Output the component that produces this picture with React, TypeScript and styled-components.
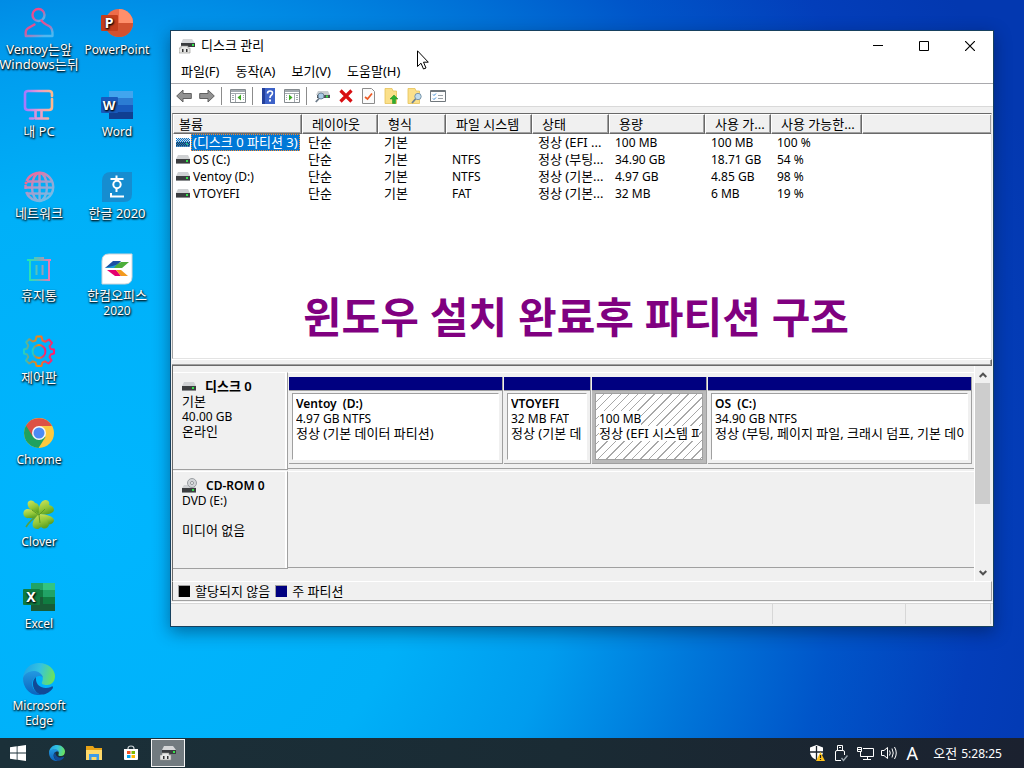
import React from "react";
import styled, { createGlobalStyle, css } from "styled-components";

/* ---------- base ---------- */

const Global = createGlobalStyle`
  *, *::before, *::after { box-sizing: border-box; }
  html, body { margin: 0; padding: 0; }
  body {
    font-family: "Noto Sans", "Noto Sans CJK KR", sans-serif;
    font-size: 12px;
    line-height: 15px;
    color: #000;
    overflow: hidden;
  }
  button {
    font: inherit;
    color: inherit;
    background: none;
    border: 0;
    padding: 0;
    margin: 0;
    cursor: default;
  }
  svg { display: block; flex: none; }
`;

const Label = styled.span<{ $hangul: boolean; $bold?: boolean }>`
  display: block;
  white-space: pre;
  font-size: ${(p) => (p.$hangul ? 13 : 12)}px;
  font-weight: ${(p) => (p.$bold ? 600 : 400)};
`;

const T = ({ children, bold }: { children: string; bold?: boolean }) => (
  <Label $hangul={/[가-힣]/.test(children)} $bold={bold}>
    {children}
  </Label>
);

/* ---------- desktop ---------- */

const Desktop = styled.div`
  position: relative;
  display: flex;
  flex-direction: column;
  min-height: 100vh;
  background: radial-gradient(
    circle at 100px 520px,
    #00b6ff 0,
    #00b0f8 320px,
    #009cee 470px,
    #0076d9 610px,
    #0055c9 740px,
    #033eba 880px,
    #0338b0 1000px
  );
`;

const Shortcuts = styled.nav`
  flex: 1;
  display: grid;
  grid-auto-flow: column;
  grid-template-rows: repeat(8, 82px) 66px;
  grid-auto-columns: 78px;
  padding-top: 7px;
  align-content: start;
`;

const Shortcut = styled.button`
  display: flex;
  flex-direction: column;
  align-items: center;
  justify-content: flex-start;
  gap: 3px;
  color: #fff;
  text-shadow: 1px 1px 2px #000, 0 1px 2px rgba(0, 0, 0, 0.8);
`;

/* ---------- window ---------- */

const Window = styled.main`
  position: absolute;
  left: 170px;
  right: 30px;
  top: 30px;
  display: flex;
  flex-direction: column;
  background: #f0f0f0;
  border: 1px solid #17415f;
  box-shadow: 0 5px 16px rgba(0, 20, 50, 0.45);
`;

const TitleBar = styled.header`
  display: flex;
  align-items: center;
  height: 29px;
  padding-left: 8px;
  background: #fff;
`;

const Title = styled.h1`
  flex: 1;
  margin: 0 0 0 6px;
  font-weight: 400;
  font-size: 12px;
`;

const CaptionButton = styled.button`
  display: flex;
  align-items: center;
  justify-content: center;
  width: 46px;
  height: 29px;
`;

const MenuBar = styled.nav`
  display: flex;
  align-items: center;
  height: 24px;
  padding-left: 2px;
  background: #fff;
  border-bottom: 1px solid #a9a9ad;
`;

const MenuItem = styled.button`
  padding: 0 8px;
`;

const ToolBar = styled.div`
  display: flex;
  align-items: center;
  height: 23px;
  padding: 2px 0 0 1px;
  background: #fff;
  border-bottom: 1px solid #d9d9d9;
`;

const Tool = styled.button`
  display: flex;
  align-items: center;
  justify-content: center;
  width: 23px;
  height: 18px;
`;

const Divider = styled.span`
  width: 8px;
  height: 18px;
  background: linear-gradient(#8c8c8c, #8c8c8c) 3px 0 / 1px 100% no-repeat;
`;

const Client = styled.div`
  padding: 6px 1px 0;
`;

/* ---------- volume list ---------- */

const ListPane = styled.section`
  min-height: 246px;
  background: #fff;
  border: 1px solid #a0a0a0;
  border-top-color: #696969;
  border-right-color: #e3e3e3;
  border-bottom-color: #e3e3e3;
`;

const VolumeTable = styled.table`
  width: 100%;
  table-layout: fixed;
  border-collapse: separate;
  border-spacing: 0;
`;

const HeadCell = styled.th<{ $first?: boolean }>`
  height: 20px;
  padding: 1px 0 0 ${(p) => (p.$first ? 5 : 9)}px;
  font-weight: 400;
  text-align: left;
  line-height: 15px;
  overflow: hidden;
  background: #f0f0f0;
  border-top: 1px solid #fff;
  border-left: 1px solid #fff;
  border-right: 1px solid #696969;
  border-bottom: 1px solid #696969;
  box-shadow: inset -1px -1px 0 #a0a0a0;
  &:last-child { border-right: 0; }
`;

const Cell = styled.td`
  height: 17px;
  padding: 0 0 0 6px;
  line-height: 17px;
  overflow: hidden;
`;

const NameCell = styled(Cell)`
  padding: 0 0 0 3px;
`;

const NameWrap = styled.div`
  display: flex;
  align-items: center;
  gap: 1px;
`;

const Name = styled.span<{ $selected?: boolean }>`
  padding: 0 2px;
  ${(p) =>
    p.$selected &&
    css`
      color: #fff;
      background: #0078d7;
      outline: 1px dotted #ff8728;
      outline-offset: -1px;
    `}
`;

const Headline = styled.p`
  margin: 85px 12px 0 0;
  text-align: center;
  white-space: nowrap;
  font-size: 42px;
  line-height: 60px;
  font-weight: 700;
  color: #800080;
`;

const Splitter = styled.div`
  height: 7px;
  border-top: 1px solid #fff;
  border-bottom: 1px solid #696969;
  border-right: 1px solid #696969;
  box-shadow: inset -1px -1px 0 #a0a0a0;
`;

/* ---------- disk view ---------- */

const DiskPane = styled.section`
  display: flex;
  height: 215px;
  border-left: 1px solid #696969;
`;

const Disks = styled.div`
  flex: 1;
  min-width: 0;
  display: flex;
  flex-direction: column;
  gap: 1px;
  padding-top: 6px;
  border-right: 1px solid #fff;
`;

const DiskRow = styled.article`
  display: flex;
  height: 98px;
`;

const DiskInfo = styled.div`
  width: 115px;
  padding: 6px 0 0 9px;
  border-top: 1px solid #fff;
  border-right: 1px solid #a0a0a0;
  border-bottom: 1px solid #a0a0a0;
  box-shadow: inset -2px 0 0 #fff;
`;

const DiskName = styled.div`
  display: flex;
  align-items: center;
  height: 15px;
  gap: 9px;
`;

const Line = styled.div`
  height: 15px;
`;

const Volumes = styled.div`
  flex: 1;
  min-width: 0;
  display: flex;
  gap: 1px;
  height: 97px;
  padding: 4px 2px 4px 1px;
  border-top: 1px solid #fff;
  border-bottom: 1px solid #a0a0a0;
`;

const Volume = styled.div<{ $share: number; $selected?: boolean }>`
  flex: ${(p) => p.$share} 1 0;
  min-width: 0;
  display: flex;
  flex-direction: column;
  border-right: 1px solid #a0a0a0;
  border-bottom: 1px solid #a0a0a0;
  background: ${(p) => (p.$selected ? "#b9b9b9" : "#f0f0f0")};
`;

const Stripe = styled.div`
  height: 14px;
  background: #000080;
  border-bottom: 1px solid #a0a0a0;
`;

const VolumeBody = styled.div<{ $selected?: boolean }>`
  flex: 1;
  margin: 2px 3px 3px;
  padding: 2px 3px;
  overflow: hidden;
  border: 1px solid #a0a0a0;
  border-right-color: ${(p) => (p.$selected ? "#a0a0a0" : "#fff")};
  border-bottom-color: ${(p) => (p.$selected ? "#a0a0a0" : "#fff")};
  background: ${(p) =>
    p.$selected
      ? "repeating-linear-gradient(135deg, #fff 0 5px, #a8a8a8 5px 6px)"
      : "#fff"};
`;

const VolumeLine = styled.div<{ $backed?: boolean }>`
  width: fit-content;
  max-width: 100%;
  height: 15px;
  overflow: hidden;
  background: ${(p) => (p.$backed ? "#fff" : "none")};
`;

const ScrollBar = styled.div`
  display: flex;
  flex-direction: column;
  width: 17px;
  padding-right: 1px;
`;

const ScrollButton = styled.button`
  display: flex;
  align-items: center;
  justify-content: center;
  height: 17px;
`;

const Track = styled.div`
  flex: 1;
`;

const Thumb = styled.div`
  width: 15px;
  height: 121px;
  background: #cdcdcd;
`;

const Legend = styled.footer`
  display: flex;
  align-items: center;
  height: 20px;
  padding-left: 5px;
  border: 1px solid #a0a0a0;
  border-top-color: #fff;
  border-left-color: #696969;
`;

const Swatch = styled.span<{ $color: string }>`
  width: 12px;
  height: 12px;
  margin: 0 5px;
  background: ${(p) => p.$color};
  border-top: 1px solid #a0a0a0;
  border-left: 1px solid #a0a0a0;
  &:first-child { margin-left: 0; }
`;

const StatusBar = styled.div`
  display: flex;
  height: 24px;
  padding: 1px 2px 2px 0;
  margin-top: 1px;
  border-top: 1px solid #fff;
  box-shadow: inset 0 1px 0 #d7d7d7;
`;

const StatusCell = styled.div<{ $width?: number }>`
  ${(p) => (p.$width ? css`width: ${p.$width}px;` : css`flex: 1;`)}
  border-right: 1px solid #d7d7d7;
`;

/* ---------- taskbar ---------- */

const TaskBar = styled.footer`
  display: flex;
  align-items: center;
  height: 30px;
  color: #fff;
  background: linear-gradient(90deg, #1b3039, #1a2b34 55%, #1b212f);
`;

const TaskButton = styled.button<{ $active?: boolean }>`
  display: flex;
  align-items: center;
  justify-content: center;
  width: 37px;
  height: 30px;
  &:first-child { width: 38px; padding-right: 2px; }
  ${(p) =>
    p.$active &&
    css`
      width: 34px;
      height: 28px;
      margin-left: 2px;
      background: #727b80;
      border: 1px solid #f4f4f4;
    `}
`;

const Tray = styled.div`
  display: flex;
  align-items: center;
  margin-left: auto;
  padding-right: 22px;
`;

const TrayButton = styled.button<{ $narrow?: boolean }>`
  display: flex;
  align-items: center;
  justify-content: center;
  width: ${(p) => (p.$narrow ? 22 : 24)}px;
  height: 30px;
`;

const InputMode = styled.span`
  font-size: 18px;
  line-height: 20px;
`;

const Clock = styled.time`
  display: flex;
  gap: 4px;
  padding-left: 10px;
`;

const Pointer = styled.svg`
  position: absolute;
  left: 417px;
  top: 50px;
`;

/* ---------- desktop icons ---------- */

const Icon32 = ({ children }: { children: React.ReactNode }) => (
  <svg width="32" height="32" viewBox="0 0 32 32" fill="none" aria-hidden="true">
    {children}
  </svg>
);

const Grad = ({ id, stops, vertical }: { id: string; stops: string[]; vertical?: boolean }) => (
  <linearGradient id={id} x1="0" y1="0" x2={vertical ? "0" : "1"} y2={vertical ? "1" : "0"}>
    {stops.map((c, i) => (
      <stop key={c + i} offset={i / (stops.length - 1)} stopColor={c} />
    ))}
  </linearGradient>
);

const UserIcon = () => (
  <Icon32>
    <defs>
      <linearGradient id="user" x1="0" y1="0" x2=".7" y2="1">
        <stop offset="0" stopColor="#ff3f7e" />
        <stop offset=".55" stopColor="#d65a9c" />
        <stop offset="1" stopColor="#4fb8f0" />
      </linearGradient>
    </defs>
    <g stroke="url(#user)" strokeWidth="2.4" strokeLinejoin="round" strokeLinecap="round">
      <circle cx="15.500" cy="8" r="6" />
      <path d="M18.500 13.500Q20 16 26 19Q30 21 29.500 29H2.800Q2 23 5 21.200L11.500 17.500" />
    </g>
  </Icon32>
);

const PcIcon = () => (
  <Icon32>
    <defs><Grad id="pc" stops={["#a678ff", "#e79ad0", "#ffb88c"]} /></defs>
    <path
      d="M29 7V5Q29 2 26 2H5Q2 2 2 5V18Q2 21 5 21H26Q29 21 29 18V10M12.500 21V29M18.500 21V29M7 29.500H10M12.500 29.500H25"
      stroke="url(#pc)"
      strokeWidth="2.6"
      strokeLinecap="round"
    />
  </Icon32>
);

const GlobeIcon = () => (
  <Icon32>
    <defs>
      <linearGradient id="globe" gradientUnits="userSpaceOnUse" x1="4" y1="2" x2="24" y2="30">
        <stop offset="0" stopColor="#ff5f93" />
        <stop offset=".5" stopColor="#a99ccb" />
        <stop offset="1" stopColor="#6cc0ea" />
      </linearGradient>
    </defs>
    <g stroke="url(#globe)" strokeWidth="2.400">
      <path d="M3.500 10A14 14 0 1 1 3.200 21M2.500 14V18" />
      <ellipse cx="16.500" cy="16" rx="7.500" ry="14" />
      <path d="M16.500 1.500L16.600 30.500M4 10.500L28 10.600M2 16.500L30.500 16.600M4 22.500L28 22.600" />
    </g>
    <circle cx="3" cy="12" r="1.500" fill="#f2688f" />
  </Icon32>
);

const TrashIcon = () => (
  <Icon32>
    <defs>
      <linearGradient id="trash" gradientUnits="userSpaceOnUse" x1="4" y1="0" x2="28" y2="0">
        <stop stopColor="#19edb0" />
        <stop offset=".5" stopColor="#6ab6bb" />
        <stop offset="1" stopColor="#ff70b0" />
      </linearGradient>
    </defs>
    <path
      d="M4 7H28M7 7V27H26V7M12 7V5H20V7M13.500 12V22M19.500 12V22"
      stroke="url(#trash)"
      strokeWidth="2"
    />
  </Icon32>
);

const GearIcon = () => (
  <Icon32>
    <defs>
      <Grad id="gear" stops={["#1fd0c8", "#b08a50", "#ff8a00", "#e9406a", "#ff1e6e"]} />
    </defs>
    <g stroke="url(#gear)" strokeWidth="2" strokeLinejoin="round">
      <path d="M13.500 1.500H18.500L19.500 5.500L22.500 6.700L26 4.500L29 8L26.500 11.200L27.700 14L31 14.500V18.500L27.700 19.500L26.500 22L28.500 25.500L25.500 28.500L22 26.300L19.500 27.500L18.500 31H13.500L12.500 27.500L9.700 26.300L6.200 28.500L3 25.500L5.200 22L4.200 19.500L1 18.500V14.500L4.200 13.500L5.200 10.500L3.200 7.200L6.200 4.200L9.700 6.500L12.500 5.500Z" />
      <circle cx="16" cy="16.500" r="6.400" />
    </g>
  </Icon32>
);

const ChromeIcon = () => (
  <Icon32>
    <circle cx="16" cy="16" r="15" fill="#fcc93f" />
    <path d="M16 16L3 8.500A15 15 0 0 0 15.500 31L22.500 20Z" fill="#1fa15d" />
    <path d="M3 8.500A15 15 0 0 1 29 9H16L9.500 19Z" fill="#dd5144" />
    <circle cx="16" cy="16" r="7" fill="#f4f6f8" />
    <circle cx="16" cy="16" r="5.500" fill="#4c8bf5" />
  </Icon32>
);

const CloverIcon = () => (
  <Icon32>
    <defs>
      <linearGradient id="clover" x1="0" y1="0" x2=".4" y2="1">
        <stop stopColor="#d3e65a" />
        <stop offset=".6" stopColor="#93c83a" />
        <stop offset="1" stopColor="#5ea324" />
      </linearGradient>
    </defs>
    <path d="M16 16Q8 20 3 28" stroke="#58a03c" strokeWidth="1.600" />
    <g fill="url(#clover)">
      <path d="M16 15C9 13 3 8 5 3C8 0 11 2 12 4C16 4 17 9 16 15Z" />
      <path d="M16 15C15 7 18 2 22 1C26 1 27 4 26 6C31 7 32 11 30 13C26 16 20 16 16 15Z" />
      <path d="M16 15C10 11 4 8 1 12C-1 16 2 20 6 19C10 20 14 18 16 15Z" />
      <path d="M16 15C24 15 32 18 31 22C29 26 26 26 24 25C22 22 18 19 16 15Z" />
      <path d="M16 15C10 20 8 26 11 29C14 31 16 30 18 28C22 31 25 29 26 26C25 21 20 17 16 15Z" />
    </g>
    <path d="M16 16L9 11M16 16L22 10M16 16L17 24" stroke="#5a9a26" strokeWidth="1" />
  </Icon32>
);

const EdgeShape = ({ size }: { size: number }) => (
  <svg width={size} height={size} viewBox="0 0 32 32" fill="none" aria-hidden="true">
    <defs>
      <linearGradient id={`edgeTop${size}`} x1="0" y1=".3" x2="1" y2=".5">
        <stop stopColor="#1fa3e6" />
        <stop offset=".5" stopColor="#35c3e0" />
        <stop offset="1" stopColor="#6be35a" />
      </linearGradient>
      <Grad id={`edgeBody${size}`} stops={["#2299e2", "#0b63bd"]} vertical />
    </defs>
    <path d="M0 15C1 5 8 0 16 0C26 0 32 7 32 13C32 19 28 22 24 22C20 22 18 21 19 19C20 17 20 15 19 13C16 8 6 6 0 15Z" fill={`url(#edgeTop${size})`} />
    <path d="M0 15C2 9 8 8 12 8C18 9 20 13 20 15C19 12 13 12 10 17C7 24 13 31 19 31.600C8 34 0 26 0 15Z" fill={`url(#edgeBody${size})`} />
    <path d="M13 14C8 18 9 27 16 31C22 33 27 29 30 25C30 23 29 23 28 24C20 27 12 23 13 14Z" fill="#114a97" />
  </svg>
);

const BrandText = ({ x, y, size, children }: { x: number; y: number; size: number; children: string }) => (
  <text x={x} y={y} fill="#fff" fontFamily="Noto Sans, sans-serif" fontSize={size} fontWeight="700" textAnchor="middle">
    {children}
  </text>
);

const PowerPointIcon = () => (
  <Icon32>
    <circle cx="18" cy="16" r="14" fill="#ee6c4a" />
    <path d="M18 2A14 14 0 0 1 32 16H18Z" fill="#ff8f6b" />
    <path d="M4 16H32A14 14 0 0 1 4 16Z" fill="#d35230" />
    <rect y="8" width="17" height="16" rx="1" fill="#c43e1c" />
    <BrandText x={8} y={21} size={14}>P</BrandText>
  </Icon32>
);

const WordIcon = () => (
  <Icon32>
    <path fill="#41a5ee" d="M8 2H32V9H8Z" />
    <path fill="#2b7cd3" d="M8 9H32V16H8Z" />
    <path fill="#185abd" d="M8 16H32V23H8Z" />
    <path fill="#103f91" d="M8 23H32V30H8Z" />
    <rect y="8" width="17" height="16" rx="1" fill="#185abd" />
    <BrandText x={8} y={21} size={13}>W</BrandText>
  </Icon32>
);

const ExcelIcon = () => (
  <Icon32>
    <path fill="#21a366" d="M8 2H20V9H8Z" />
    <path fill="#33c481" d="M20 2H32V9H20Z" />
    <path fill="#107c41" d="M8 9H20V16H8ZM20 16H32V23H20Z" />
    <path fill="#21a366" d="M20 9H32V16H20Z" />
    <path fill="#185c37" d="M8 16H20V23H32V30H8Z" />
    <rect y="8" width="17" height="16" rx="1" fill="#107c41" />
    <BrandText x={8} y={21} size={14}>X</BrandText>
  </Icon32>
);

const HangulIcon = () => (
  <Icon32>
    <path d="M10 1H31V23Q31 31 23 31H1V10Q1 1 10 1Z" fill="#168dd0" />
    <g stroke="#fff" strokeWidth="2">
      <path d="M15.500 4.500V7M9.500 8H22.500M15.500 17V21M10 22V25.500H23" />
      <circle cx="16" cy="13.500" r="3.700" />
    </g>
  </Icon32>
);

const HancomIcon = () => (
  <Icon32>
    <path d="M8 1H31V24Q31 31 24 31H1V8Q1 1 8 1Z" fill="#fff" stroke="#d0d5da" />
    <path d="M4 15L12 8H20L15 14Z" fill="#1a4fa3" />
    <path d="M12 14L20 9H28L21 15H10Z" fill="#4cae3a" />
    <path d="M4 15L15 12L18 9L13 15Z" fill="#1b9bd7" />
    <path d="M6 17H15L20 23H14Z" fill="#e5006e" />
    <path d="M15 17H20L27 23H20Z" fill="#f39a1e" />
  </Icon32>
);

const shortcuts: { label: string[]; icon: React.ReactNode }[] = [
  { label: ["Ventoy는앞", "Windows는뒤"], icon: <UserIcon /> },
  { label: ["내 PC"], icon: <PcIcon /> },
  { label: ["네트워크"], icon: <GlobeIcon /> },
  { label: ["휴지통"], icon: <TrashIcon /> },
  { label: ["제어판"], icon: <GearIcon /> },
  { label: ["Chrome"], icon: <ChromeIcon /> },
  { label: ["Clover"], icon: <CloverIcon /> },
  { label: ["Excel"], icon: <ExcelIcon /> },
  { label: ["Microsoft", "Edge"], icon: <EdgeShape size={32} /> },
  { label: ["PowerPoint"], icon: <PowerPointIcon /> },
  { label: ["Word"], icon: <WordIcon /> },
  { label: ["한글 2020"], icon: <HangulIcon /> },
  { label: ["한컴오피스", "2020"], icon: <HancomIcon /> },
];

/* ---------- small icons ---------- */

const DriveIcon = ({ selected }: { selected?: boolean }) => (
  <svg width="14" height="9" viewBox="0 0 14 9" aria-hidden="true">
    <defs>
      <pattern id="dither" width="2" height="2" patternUnits="userSpaceOnUse">
        <path d="M0 0H1V1H0ZM1 1H2V2H1Z" fill="#0078d7" />
      </pattern>
    </defs>
    <path d="M2 0H12L14 4H0Z" fill="#cfd1d3" />
    <path d="M0 4H14V8H0Z" fill="#3b3d3f" />
    <path d="M0 8H14V9H0Z" fill="#8b8d8f" />
    <path d="M10 5H12V7H10Z" fill="#35e24b" />
    {selected && <path d="M0 0H14V9H0Z" fill="url(#dither)" />}
  </svg>
);

const CdIcon = () => (
  <svg width="15" height="15" viewBox="0 0 15 15" aria-hidden="true">
    <path d="M2 7H12L14 10H0Z" fill="#cfd1d3" />
    <circle cx="10" cy="5" r="4.500" fill="#d3d6d8" stroke="#9a9ea2" />
    <circle cx="10" cy="5" r="1.500" fill="#fff" stroke="#8f9397" />
    <path d="M0 10H14V14H0Z" fill="#3b3d3f" />
    <path d="M0 14H14V15H0Z" fill="#8b8d8f" />
    <path d="M10 11H12V13H10Z" fill="#35e24b" />
  </svg>
);

const AppIcon = () => (
  <svg width="16" height="16" viewBox="0 0 16 16" aria-hidden="true">
    <path d="M4 1H13L16 5H2Z" fill="#d5d7d9" />
    <path d="M2 5H16V9H2Z" fill="#3a3c3e" />
    <path d="M13 6H15V8H13Z" fill="#35e24b" />
    <path d="M2 8H9V10H11V15H0V10H2Z" fill="#e8e8e6" stroke="#8e8e8c" strokeWidth=".6" />
    <path d="M3 11H4.500V14H3ZM7 11H8.500V14H7Z" fill="#333" />
  </svg>
);

const Arrow = ({ flip }: { flip?: boolean }) => (
  <svg width="16" height="14" viewBox="0 0 16 14" aria-hidden="true">
    <path
      d={flip ? "M15.300 7L9 1V4.500H.7V9.500H9V13Z" : "M.7 7L7 1V4.500H15.300V9.500H7V13Z"}
      fill="#929292"
      stroke="#606060"
    />
  </svg>
);

const PanelIcon = ({ right }: { right?: boolean }) => (
  <svg width="16" height="14" viewBox="0 0 16 14" aria-hidden="true">
    <path d="M.5 .5H15.500V13.500H.5Z" fill="#fff" stroke="#858b8f" />
    <path d="M1 1H15V3H1Z" fill="#a3aaaf" />
    <path d="M1 4.500H15" stroke="#a3aaaf" />
    <path
      d={
        right
          ? "M10.500 5V13M2 6.500H3M2 8.500H3M2 10.500H3M12 6.500H14M12 8.500H14M12 10.500H14"
          : "M5.500 5V13M2 6.500H4M2 8.500H4M2 10.500H4M13 6.500H14M13 8.500H14M13 10.500H14"
      }
      stroke="#a3aaaf"
    />
    <path d={right ? "M5 5.500L8.500 8.500L5 11.500Z" : "M11 5.500L7.500 8.500L11 11.500Z"} fill="#3aaa22" />
  </svg>
);

const HelpIcon = () => (
  <svg width="13" height="16" viewBox="0 0 13 16" aria-hidden="true">
    <path d="M0 0H13V16H0Z" fill="#3d62c8" />
    <path d="M0 0H3V16H0Z" fill="#24409a" />
    <path d="M5.500 5.500Q5.500 3 8 3Q10.500 3 10.500 5Q10.500 6.500 9 7.500Q8 8.200 8 10" fill="none" stroke="#fff" strokeWidth="1.600" />
    <path d="M7 11.500H9V13.500H7Z" fill="#fff" />
  </svg>
);

const InspectIcon = () => (
  <svg width="15" height="13" viewBox="0 0 15 13" aria-hidden="true">
    <path d="M3 1H13L15 5H1Z" fill="#c9cdd0" />
    <path d="M2 5H15V8H2Z" fill="#4b4f52" />
    <path d="M11 5.500H13V7.500H11Z" fill="#35e24b" />
    <circle cx="6" cy="6" r="3" fill="#a9cbe6" stroke="#6b8399" />
    <path d="M4 8.500L.8 12" stroke="#6b7a88" strokeWidth="1.800" />
  </svg>
);

const DeleteIcon = () => (
  <svg width="14" height="14" viewBox="0 0 14 14" aria-hidden="true">
    <path d="M1.500 1.500L12.500 12.500M12.500 1.500L1.500 12.500" stroke="#d80e12" strokeWidth="3.200" />
  </svg>
);

const CheckDocIcon = () => (
  <svg width="13" height="16" viewBox="0 0 13 16" fill="none" aria-hidden="true">
    <path d="M.5 .5H9.500L12.500 3.500V15.500H.5Z" fill="#fbfbfb" stroke="#8c8c8c" />
    <path d="M3 9L5.500 11L10 5.500" stroke="#ee5a24" strokeWidth="1.700" />
  </svg>
);

const FolderTool = ({ search }: { search?: boolean }) => (
  <svg width="15" height="16" viewBox="0 0 15 16" aria-hidden="true">
    <path d="M1 .5H8L9 3H12.500V15.500H1Z" fill="#fbe08a" stroke="#e6c257" strokeWidth=".8" />
    {search ? (
      <>
        <circle cx="11" cy="8.500" r="3.200" fill="#bfdcee" stroke="#7b95a8" />
        <path d="M8.500 11L5 15" stroke="#6d8194" strokeWidth="1.800" />
      </>
    ) : (
      <path d="M10 7L14 11H11.500V15.500H8.500V11H6Z" fill="#2fae2f" stroke="#1d8a1d" strokeWidth=".5" />
    )}
  </svg>
);

const PropertiesIcon = () => (
  <svg width="16" height="12" viewBox="0 0 16 12" fill="none" aria-hidden="true">
    <path d="M.5 .5H15.500V11.500H.5Z" fill="#fdfdfd" stroke="#70777c" />
    <path d="M1 1.500H15" stroke="#70777c" />
    <path d="M3 4.500L4 5.500L6 3.500M3 8.500L4 9.500L6 7.500" stroke="#2f86d6" />
    <path d="M8 5.500H13M8 8.500H13" stroke="#9aa1a6" />
  </svg>
);

const Chevron = ({ down }: { down?: boolean }) => (
  <svg width="8" height="6" viewBox="0 0 8 6" fill="none" aria-hidden="true">
    <path d={down ? "M.7 1L4 4.300L7.300 1" : "M.7 5L4 1.700L7.300 5"} stroke="#505050" strokeWidth="2" />
  </svg>
);

/* ---------- data ---------- */

const columns: { title: string; width?: number }[] = [
  { title: "볼륨", width: 129 },
  { title: "레이아웃", width: 76 },
  { title: "형식", width: 68 },
  { title: "파일 시스템", width: 86 },
  { title: "상태", width: 77 },
  { title: "용량", width: 96 },
  { title: "사용 가...", width: 66 },
  { title: "사용 가능한...", width: 91 },
  { title: "" },
];

const rows = [
  ["(디스크 0 파티션 3)", "단순", "기본", "", "정상 (EFI ...", "100 MB", "100 MB", "100 %"],
  ["OS (C:)", "단순", "기본", "NTFS", "정상 (부팅...", "34.90 GB", "18.71 GB", "54 %"],
  ["Ventoy (D:)", "단순", "기본", "NTFS", "정상 (기본...", "4.97 GB", "4.85 GB", "98 %"],
  ["VTOYEFI", "단순", "기본", "FAT", "정상 (기본...", "32 MB", "6 MB", "19 %"],
];

const volumes = [
  { name: "Ventoy  (D:)", size: "4.97 GB NTFS", state: "정상 (기본 데이터 파티션)", share: 213 },
  { name: "VTOYEFI", size: "32 MB FAT", state: "정상 (기본 데", share: 86 },
  { name: "", size: "100 MB", state: "정상 (EFI 시스템 파", share: 114, selected: true },
  { name: "OS  (C:)", size: "34.90 GB NTFS", state: "정상 (부팅, 페이지 파일, 크래시 덤프, 기본 데이", share: 263 },
];

const menus = ["파일(F)", "동작(A)", "보기(V)", "도움말(H)"];

const tools: (null | [string, React.ReactNode])[] = [
  ["뒤로", <Arrow />],
  ["앞으로", <Arrow flip />],
  null,
  ["콘솔 트리", <PanelIcon />],
  null,
  ["도움말", <HelpIcon />],
  ["작업 창", <PanelIcon right />],
  null,
  ["새로 고침", <InspectIcon />],
  ["삭제", <DeleteIcon />],
  ["확인", <CheckDocIcon />],
  ["열기", <FolderTool />],
  ["탐색", <FolderTool search />],
  ["속성", <PropertiesIcon />],
];

/* ---------- page ---------- */

const DiskManagement = () => (
  <Window>
    <TitleBar>
      <AppIcon />
      <Title><T>디스크 관리</T></Title>
      <CaptionButton aria-label="최소화">
        <svg width="10" height="10" viewBox="0 0 10 10"><path d="M0 4.500H10" stroke="#000" /></svg>
      </CaptionButton>
      <CaptionButton aria-label="최대화">
        <svg width="10" height="10" viewBox="0 0 10 10"><path d="M.5 .5H9.500V9.500H.5Z" fill="none" stroke="#000" /></svg>
      </CaptionButton>
      <CaptionButton aria-label="닫기">
        <svg width="10" height="10" viewBox="0 0 10 10"><path d="M0 0L10 10M10 0L0 10" stroke="#000" strokeWidth="1.200" /></svg>
      </CaptionButton>
    </TitleBar>

    <MenuBar>
      {menus.map((m) => (
        <MenuItem key={m}><T>{m}</T></MenuItem>
      ))}
    </MenuBar>

    <ToolBar>
      {tools.map((t, i) =>
        t ? <Tool key={i} aria-label={t[0]}>{t[1]}</Tool> : <Divider key={i} />
      )}
    </ToolBar>

    <Client>
      <ListPane>
        <VolumeTable>
          <colgroup>
            {columns.map((c, i) => <col key={i} width={c.width} />)}
          </colgroup>
          <thead>
            <tr>
              {columns.map((c, i) => (
                <HeadCell key={i} $first={i === 0} scope="col"><T>{c.title}</T></HeadCell>
              ))}
            </tr>
          </thead>
          <tbody>
            {rows.map(([name, ...cells], i) => (
              <tr key={name}>
                <NameCell>
                  <NameWrap>
                    <DriveIcon selected={i === 0} />
                    <Name $selected={i === 0}><T>{name}</T></Name>
                  </NameWrap>
                </NameCell>
                {cells.map((c, j) => <Cell key={j}><T>{c}</T></Cell>)}
                <Cell />
              </tr>
            ))}
          </tbody>
        </VolumeTable>
        <Headline>윈도우 설치 완료후 파티션 구조</Headline>
      </ListPane>

      <Splitter />

      <DiskPane>
        <Disks>
          <DiskRow>
            <DiskInfo>
              <DiskName><DriveIcon /><T bold>디스크 0</T></DiskName>
              <Line><T>기본</T></Line>
              <Line><T>40.00 GB</T></Line>
              <Line><T>온라인</T></Line>
            </DiskInfo>
            <Volumes>
              {volumes.map((v) => (
                <Volume key={v.share} $share={v.share} $selected={v.selected}>
                  <Stripe />
                  <VolumeBody $selected={v.selected}>
                    <VolumeLine $backed={!!v.name}><T bold>{v.name}</T></VolumeLine>
                    <VolumeLine $backed><T>{v.size}</T></VolumeLine>
                    <VolumeLine $backed><T>{v.state}</T></VolumeLine>
                  </VolumeBody>
                </Volume>
              ))}
            </Volumes>
          </DiskRow>
          <DiskRow>
            <DiskInfo>
              <DiskName><CdIcon /><T bold>CD-ROM 0</T></DiskName>
              <Line><T>DVD (E:)</T></Line>
              <Line />
              <Line><T>미디어 없음</T></Line>
            </DiskInfo>
            <Volumes />
          </DiskRow>
        </Disks>
        <ScrollBar>
          <ScrollButton aria-label="위로"><Chevron /></ScrollButton>
          <Track><Thumb /></Track>
          <ScrollButton aria-label="아래로"><Chevron down /></ScrollButton>
        </ScrollBar>
      </DiskPane>

      <Legend>
        <Swatch $color="#000" />
        <T>할당되지 않음</T>
        <Swatch $color="#000080" />
        <T>주 파티션</T>
      </Legend>
    </Client>

    <StatusBar>
      <StatusCell />
      <StatusCell $width={133} />
      <StatusCell $width={85} />
    </StatusBar>
  </Window>
);

export default function App() {
  return (
    <Desktop>
      <Global />
      <Shortcuts>
        {shortcuts.map((s) => (
          <Shortcut key={s.label[0]}>
            {s.icon}
            <span>{s.label.map((l) => <T key={l}>{l}</T>)}</span>
          </Shortcut>
        ))}
      </Shortcuts>

      <DiskManagement />

      <TaskBar>
        <TaskButton aria-label="시작">
          <svg width="16" height="16" viewBox="0 0 16 16" fill="#fff">
            <path d="M0 2.300L6.700 1.300V7.600H0ZM7.500 1.200L16 0V7.600H7.500ZM0 8.400H6.700V14.700L0 13.700ZM7.500 8.400H16V16L7.500 14.800Z" />
          </svg>
        </TaskButton>
        <TaskButton aria-label="Edge"><EdgeShape size={16} /></TaskButton>
        <TaskButton aria-label="파일 탐색기">
          <svg width="16" height="14" viewBox="0 0 16 14">
            <path d="M0 0H7L8.500 2H16V14H0Z" fill="#e8a317" />
            <path d="M0 4H16V14H0Z" fill="#ffd96a" />
            <path d="M3 14V8H13V14H10.500V11H5.500V14Z" fill="#3f9be8" />
          </svg>
        </TaskButton>
        <TaskButton aria-label="스토어">
          <svg width="16" height="16" viewBox="0 0 16 16">
            <path d="M5 5V3.500Q5 1 8 1Q11 1 11 3.500V5" fill="none" stroke="#c9d0d4" strokeWidth="1.200" />
            <path d="M1 4H15V14Q15 15 14 15H2Q1 15 1 14Z" fill="#fff" />
            <path d="M4 6H7.500V9H4Z" fill="#f25022" />
            <path d="M8.500 6H12V9H8.500Z" fill="#7fba00" />
            <path d="M4 10H7.500V13H4Z" fill="#00a4ef" />
            <path d="M8.500 10H12V13H8.500Z" fill="#ffb900" />
          </svg>
        </TaskButton>
        <TaskButton $active aria-label="디스크 관리"><AppIcon /></TaskButton>

        <Tray>
          <TrayButton aria-label="보안">
            <svg width="16" height="16" viewBox="0 0 16 16">
              <path d="M7.500 0L14 2.500V7Q14 12 7.500 15Q1 12 1 7V2.500Z" fill="#fff" />
              <path d="M7.500 1V15M1 7H14" stroke="#1b232d" strokeWidth="1.300" />
              <path d="M11.500 7L16 16H7Z" fill="#ffc21a" />
              <path d="M11.500 10V13M11.500 14V15" stroke="#222" strokeWidth="1.200" />
            </svg>
          </TrayButton>
          <TrayButton aria-label="USB">
            <svg width="14" height="17" viewBox="0 0 14 17" fill="none" stroke="#fff">
              <path d="M3.500 5V.5H8.500V5M5 2.500H7M1.500 15.500V7Q1.500 5.500 3 5.500H9Q10.500 5.500 10.500 7V10M1.500 15.500H7" />
              <path d="M7.500 13L9.500 15.500L13.500 10.500" stroke="#9aa5ad" strokeWidth="1.400" />
            </svg>
          </TrayButton>
          <TrayButton aria-label="네트워크">
            <svg width="17" height="15" viewBox="0 0 17 15" fill="none" stroke="#fff">
              <path d="M6 2.500H16.500V10.500H3.500V6M10.500 10.500V13.500M6 13.500H14M.5 1.500H4.500V5.500H.5ZM1 3.500H4" />
            </svg>
          </TrayButton>
          <TrayButton aria-label="볼륨">
            <svg width="17" height="14" viewBox="0 0 17 14" fill="none" stroke="#fff">
              <path d="M.5 4.500H3L6.500 1.500V12.500L3 9.500H.5ZM8.500 4.500Q10 7 8.500 9.500M11 2.500Q13.500 7 11 11.500M13.500 1Q17 7 13.500 13" />
            </svg>
          </TrayButton>
          <TrayButton $narrow><InputMode>A</InputMode></TrayButton>
          <Clock><T>오전</T><T>5:28:25</T></Clock>
        </Tray>
      </TaskBar>

      <Pointer width="12" height="20" viewBox="0 0 12 20" aria-hidden="true">
        <path d="M.5 .8V16.500L4 13.200L6.500 19L9 18L6.500 12.200H11.300Z" fill="#fff" stroke="#000" />
      </Pointer>
    </Desktop>
  );
}
